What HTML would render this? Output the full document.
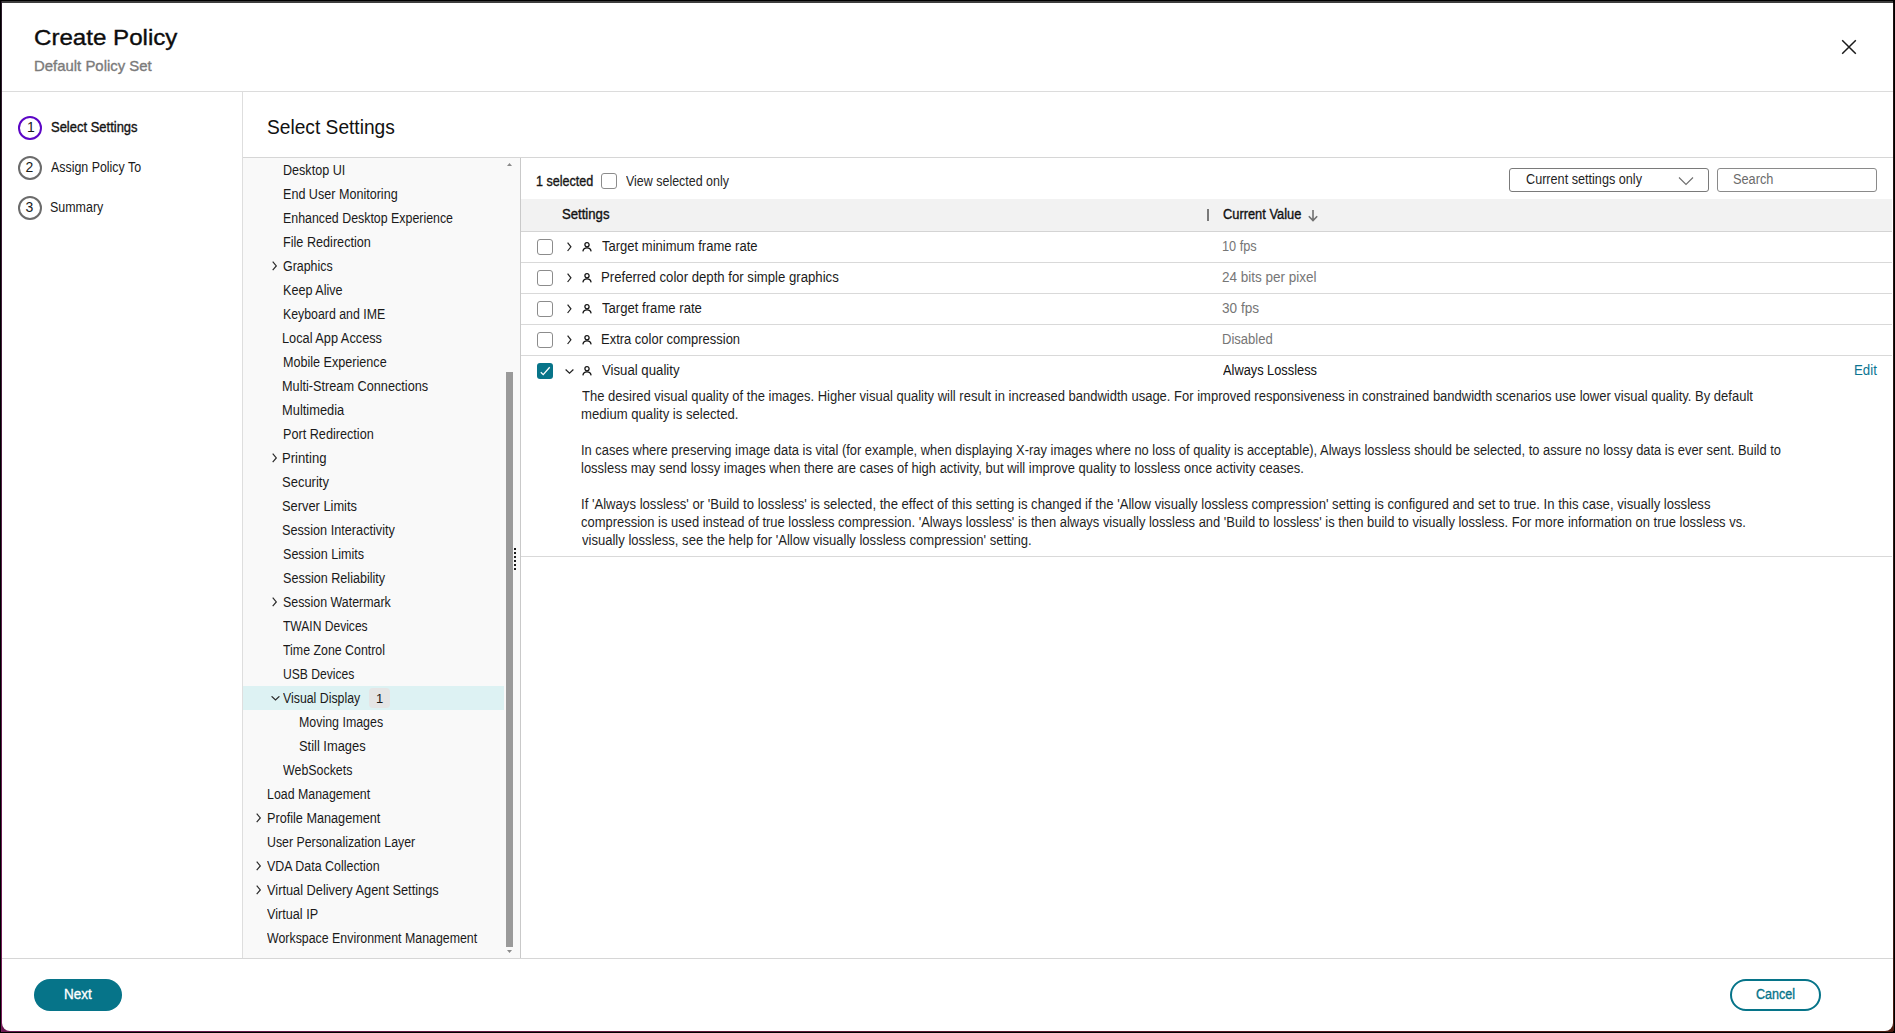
<!DOCTYPE html>
<html><head><meta charset="utf-8">
<style>
*{box-sizing:border-box;margin:0;padding:0}
html,body{width:1895px;height:1033px;overflow:hidden;background:#000}
body{position:relative;font-family:"Liberation Sans", sans-serif}
.a{position:absolute}
.t{position:absolute;white-space:nowrap;transform-origin:0 0}
</style></head><body>
<div class="a" style="left:2px;top:1px;width:1891px;height:2px;background:#3d3d3d"></div>
<div class="a" style="left:1px;top:1px;width:1px;height:1031px;background:linear-gradient(#2a1a2a,#521c44 50%,#7a1c5c)"></div>
<div class="a" style="left:1893px;top:3px;width:1px;height:1028px;background:linear-gradient(#1e1212,#3d2019 90%,#4a1a10)"></div>
<div class="a" style="left:2px;top:1031px;width:1891px;height:1px;background:linear-gradient(90deg,#6a1a50,#4a1a10)"></div>
<div class="a" style="left:2px;top:1020px;width:10px;height:11px;background:#6a1a50"></div>
<div class="a" style="left:1883px;top:1020px;width:10px;height:11px;background:#4a1a10"></div>
<div class="a" style="left:2px;top:3px;width:1891px;height:1028px;background:#fff;border-radius:0 0 8px 8px"></div>
<svg class="a" style="left:1841px;top:39px" width="16" height="16" viewBox="0 0 16 16"><path d="M1.2 1.2 L14.8 14.8 M14.8 1.2 L1.2 14.8" stroke="#1a1a1a" stroke-width="1.5" fill="none"/></svg>
<div class="a" style="left:2px;top:91px;width:1891px;height:1px;background:#dcdcdc"></div>
<div class="a" style="left:242px;top:92px;width:1px;height:866px;background:#dedede"></div>
<div class="a" style="left:18px;top:116px;width:24px;height:24px;border:2px solid #5c06c6;border-radius:50%"></div>
<div class="a" style="left:18px;top:156px;width:24px;height:24px;border:2px solid #6b6b6b;border-radius:50%"></div>
<div class="a" style="left:18px;top:196px;width:24px;height:24px;border:2px solid #6b6b6b;border-radius:50%"></div>
<div class="a" style="left:243px;top:157px;width:1650px;height:1px;background:#d6d6d6"></div>
<div class="a" style="left:243px;top:158px;width:277px;height:800px;background:#f9f9f9"></div>
<div class="a" style="left:520px;top:158px;width:1px;height:800px;background:#c9c9c9"></div>
<div class="a" style="left:243px;top:686px;width:261px;height:24px;background:#ddf2f3"></div>
<div class="a" style="left:369px;top:688px;width:21px;height:20px;border-radius:4px;background:#e5e5e5"></div>
<svg class="a" style="left:272px;top:261px" width="6" height="11" viewBox="0 0 6 11"><path d="M0.7 0.7 L4.3 4.9 L0.7 9.1" stroke="#2a2a2a" stroke-width="1.2" fill="none"/></svg>
<svg class="a" style="left:272px;top:453px" width="6" height="11" viewBox="0 0 6 11"><path d="M0.7 0.7 L4.3 4.9 L0.7 9.1" stroke="#2a2a2a" stroke-width="1.2" fill="none"/></svg>
<svg class="a" style="left:272px;top:597px" width="6" height="11" viewBox="0 0 6 11"><path d="M0.7 0.7 L4.3 4.9 L0.7 9.1" stroke="#2a2a2a" stroke-width="1.2" fill="none"/></svg>
<svg class="a" style="left:271px;top:696px" width="9" height="5" viewBox="0 0 9 5"><path d="M0.6 0.3 L4.5 3.9 L8.4 0.3" stroke="#2a2a2a" stroke-width="1.2" fill="none"/></svg>
<svg class="a" style="left:256px;top:813px" width="6" height="11" viewBox="0 0 6 11"><path d="M0.7 0.7 L4.3 4.9 L0.7 9.1" stroke="#2a2a2a" stroke-width="1.2" fill="none"/></svg>
<svg class="a" style="left:256px;top:861px" width="6" height="11" viewBox="0 0 6 11"><path d="M0.7 0.7 L4.3 4.9 L0.7 9.1" stroke="#2a2a2a" stroke-width="1.2" fill="none"/></svg>
<svg class="a" style="left:256px;top:885px" width="6" height="11" viewBox="0 0 6 11"><path d="M0.7 0.7 L4.3 4.9 L0.7 9.1" stroke="#2a2a2a" stroke-width="1.2" fill="none"/></svg>
<svg class="a" style="left:507px;top:163px" width="5" height="3" viewBox="0 0 5 3"><path d="M0 3 L2.5 0 L5 3Z" fill="#8a8a8a"/></svg>
<div class="a" style="left:506px;top:372px;width:7px;height:575px;background:#9a9a9a"></div>
<svg class="a" style="left:507px;top:950px" width="5" height="3" viewBox="0 0 5 3"><path d="M0 0 L2.5 3 L5 0Z" fill="#8a8a8a"/></svg>
<div class="a" style="left:514px;top:548px;width:2px;height:2px;background:#1a1a1a"></div>
<div class="a" style="left:514px;top:552px;width:2px;height:2px;background:#1a1a1a"></div>
<div class="a" style="left:514px;top:556px;width:2px;height:2px;background:#1a1a1a"></div>
<div class="a" style="left:514px;top:560px;width:2px;height:2px;background:#1a1a1a"></div>
<div class="a" style="left:514px;top:564px;width:2px;height:2px;background:#1a1a1a"></div>
<div class="a" style="left:514px;top:568px;width:2px;height:2px;background:#1a1a1a"></div>
<div class="a" style="left:601px;top:173px;width:16px;height:16px;border:1.5px solid #8c8c8c;border-radius:3px;background:#fff"></div>
<div class="a" style="left:1509px;top:168px;width:200px;height:24px;border:1px solid #7a7a7a;border-radius:3px"></div>
<svg class="a" style="left:1678px;top:176px" width="16" height="10" viewBox="0 0 16 10"><path d="M1 1.5 L8 8.5 L15 1.5" stroke="#6e6e6e" stroke-width="1.1" fill="none"/></svg>
<div class="a" style="left:1717px;top:168px;width:160px;height:24px;border:1px solid #8a8a8a;border-radius:3px"></div>
<div class="a" style="left:521px;top:199px;width:1371px;height:32px;background:#f2f2f2"></div>
<div class="a" style="left:521px;top:231px;width:1371px;height:1px;background:#d4d4d4"></div>
<div class="a" style="left:1207px;top:209px;width:2px;height:12px;background:#7a7a7a"></div>
<svg class="a" style="left:1307px;top:209px" width="12" height="13" viewBox="0 0 12 13"><path d="M6 1 L6 11.5 M1.8 7.3 L6 11.5 L10.2 7.3" stroke="#707070" stroke-width="1.6" fill="none"/></svg>
<div class="a" style="left:537px;top:239px;width:16px;height:16px;border:1.5px solid #8c8c8c;border-radius:3px;background:#fff"></div>
<svg class="a" style="left:567px;top:242px" width="6" height="11" viewBox="0 0 6 11"><path d="M0.6 0.6 L3.9 4.8 L0.6 9" stroke="#222" stroke-width="1.2" fill="none"/></svg>
<svg class="a" style="left:582px;top:242px" width="11" height="11" viewBox="0 0 11 11"><circle cx="5" cy="2.8" r="2.1" stroke="#111" stroke-width="1.25" fill="none"/><path d="M0.9 9.4 C1.2 6.9 2.9 5.8 5 5.8 C7.1 5.8 8.8 6.9 9.1 9.4" stroke="#111" stroke-width="1.25" fill="none"/></svg>
<div class="a" style="left:521px;top:262px;width:1371px;height:1px;background:#d9d9d9"></div>
<div class="a" style="left:537px;top:270px;width:16px;height:16px;border:1.5px solid #8c8c8c;border-radius:3px;background:#fff"></div>
<svg class="a" style="left:567px;top:273px" width="6" height="11" viewBox="0 0 6 11"><path d="M0.6 0.6 L3.9 4.8 L0.6 9" stroke="#222" stroke-width="1.2" fill="none"/></svg>
<svg class="a" style="left:582px;top:273px" width="11" height="11" viewBox="0 0 11 11"><circle cx="5" cy="2.8" r="2.1" stroke="#111" stroke-width="1.25" fill="none"/><path d="M0.9 9.4 C1.2 6.9 2.9 5.8 5 5.8 C7.1 5.8 8.8 6.9 9.1 9.4" stroke="#111" stroke-width="1.25" fill="none"/></svg>
<div class="a" style="left:521px;top:293px;width:1371px;height:1px;background:#d9d9d9"></div>
<div class="a" style="left:537px;top:301px;width:16px;height:16px;border:1.5px solid #8c8c8c;border-radius:3px;background:#fff"></div>
<svg class="a" style="left:567px;top:304px" width="6" height="11" viewBox="0 0 6 11"><path d="M0.6 0.6 L3.9 4.8 L0.6 9" stroke="#222" stroke-width="1.2" fill="none"/></svg>
<svg class="a" style="left:582px;top:304px" width="11" height="11" viewBox="0 0 11 11"><circle cx="5" cy="2.8" r="2.1" stroke="#111" stroke-width="1.25" fill="none"/><path d="M0.9 9.4 C1.2 6.9 2.9 5.8 5 5.8 C7.1 5.8 8.8 6.9 9.1 9.4" stroke="#111" stroke-width="1.25" fill="none"/></svg>
<div class="a" style="left:521px;top:324px;width:1371px;height:1px;background:#d9d9d9"></div>
<div class="a" style="left:537px;top:332px;width:16px;height:16px;border:1.5px solid #8c8c8c;border-radius:3px;background:#fff"></div>
<svg class="a" style="left:567px;top:335px" width="6" height="11" viewBox="0 0 6 11"><path d="M0.6 0.6 L3.9 4.8 L0.6 9" stroke="#222" stroke-width="1.2" fill="none"/></svg>
<svg class="a" style="left:582px;top:335px" width="11" height="11" viewBox="0 0 11 11"><circle cx="5" cy="2.8" r="2.1" stroke="#111" stroke-width="1.25" fill="none"/><path d="M0.9 9.4 C1.2 6.9 2.9 5.8 5 5.8 C7.1 5.8 8.8 6.9 9.1 9.4" stroke="#111" stroke-width="1.25" fill="none"/></svg>
<div class="a" style="left:521px;top:355px;width:1371px;height:1px;background:#d9d9d9"></div>
<div class="a" style="left:537px;top:363px;width:16px;height:16px;border-radius:3px;background:#077489"></div>
<svg class="a" style="left:537px;top:363px" width="16" height="16" viewBox="0 0 16 16"><path d="M3.8 9.3 L6.2 11.6 L12.7 4.2" stroke="#fff" stroke-width="1.3" fill="none"/></svg>
<svg class="a" style="left:565px;top:369px" width="9" height="5" viewBox="0 0 9 5"><path d="M0.6 0.5 L4.5 4.1 L8.4 0.5" stroke="#222" stroke-width="1.2" fill="none"/></svg>
<svg class="a" style="left:582px;top:366px" width="11" height="11" viewBox="0 0 11 11"><circle cx="5" cy="2.8" r="2.1" stroke="#111" stroke-width="1.25" fill="none"/><path d="M0.9 9.4 C1.2 6.9 2.9 5.8 5 5.8 C7.1 5.8 8.8 6.9 9.1 9.4" stroke="#111" stroke-width="1.25" fill="none"/></svg>
<div class="a" style="left:521px;top:556px;width:1371px;height:1px;background:#d9d9d9"></div>
<div class="a" style="left:2px;top:958px;width:1891px;height:1px;background:#d6d6d6"></div>
<div class="a" style="left:34px;top:979px;width:88px;height:32px;border-radius:16px;background:#067489"></div>
<div class="a" style="left:1730px;top:979px;width:91px;height:32px;border-radius:16px;border:2px solid #067489"></div>
<div class="t" id="t0" style="left:33.60px;top:27px;font-size:22px;line-height:22px;font-weight:400;color:#0d0d0d;-webkit-text-stroke-width:0.35px;transform:scaleX(1.0962);">Create Policy</div>
<div class="t" id="t1" style="left:33.71px;top:58px;font-size:15px;line-height:15px;font-weight:400;color:#7b7b7b;-webkit-text-stroke-width:0.35px;transform:scaleX(0.9941);">Default Policy Set</div>
<div class="t" id="t2" style="left:50.50px;top:120px;font-size:14px;line-height:14px;font-weight:400;color:#141414;-webkit-text-stroke-width:0.35px;transform:scaleX(0.9269);">Select Settings</div>
<div class="t" id="t3" style="left:50.50px;top:160px;font-size:14px;line-height:14px;font-weight:400;color:#1a1a1a;transform:scaleX(0.8861);">Assign Policy To</div>
<div class="t" id="t4" style="left:49.61px;top:200px;font-size:14px;line-height:14px;font-weight:400;color:#1a1a1a;transform:scaleX(0.8898);">Summary</div>
<div class="t" id="t5" style="left:27.00px;top:120px;font-size:14px;line-height:14px;font-weight:400;color:#1a1a1a;">1</div>
<div class="t" id="t6" style="left:25.60px;top:160px;font-size:14px;line-height:14px;font-weight:400;color:#1a1a1a;">2</div>
<div class="t" id="t7" style="left:25.60px;top:200px;font-size:14px;line-height:14px;font-weight:400;color:#1a1a1a;">3</div>
<div class="t" id="t8" style="left:266.84px;top:117px;font-size:20px;line-height:20px;font-weight:400;color:#111;transform:scaleX(0.9583);">Select Settings</div>
<div class="t" id="t9" style="left:282.50px;top:163px;font-size:14px;line-height:14px;font-weight:400;color:#1a1a1a;transform:scaleX(0.8985);">Desktop UI</div>
<div class="t" id="t10" style="left:282.50px;top:187px;font-size:14px;line-height:14px;font-weight:400;color:#1a1a1a;transform:scaleX(0.8984);">End User Monitoring</div>
<div class="t" id="t11" style="left:282.52px;top:211px;font-size:14px;line-height:14px;font-weight:400;color:#1a1a1a;transform:scaleX(0.8843);">Enhanced Desktop Experience</div>
<div class="t" id="t12" style="left:282.50px;top:235px;font-size:14px;line-height:14px;font-weight:400;color:#1a1a1a;transform:scaleX(0.9031);">File Redirection</div>
<div class="t" id="t13" style="left:282.51px;top:259px;font-size:14px;line-height:14px;font-weight:400;color:#1a1a1a;transform:scaleX(0.8873);">Graphics</div>
<div class="t" id="t14" style="left:282.50px;top:283px;font-size:14px;line-height:14px;font-weight:400;color:#1a1a1a;transform:scaleX(0.9015);">Keep Alive</div>
<div class="t" id="t15" style="left:282.52px;top:307px;font-size:14px;line-height:14px;font-weight:400;color:#1a1a1a;transform:scaleX(0.8807);">Keyboard and IME</div>
<div class="t" id="t16" style="left:282.49px;top:331px;font-size:14px;line-height:14px;font-weight:400;color:#1a1a1a;transform:scaleX(0.9111);">Local App Access</div>
<div class="t" id="t17" style="left:282.50px;top:355px;font-size:14px;line-height:14px;font-weight:400;color:#1a1a1a;transform:scaleX(0.9000);">Mobile Experience</div>
<div class="t" id="t18" style="left:282.49px;top:379px;font-size:14px;line-height:14px;font-weight:400;color:#1a1a1a;transform:scaleX(0.9075);">Multi-Stream Connections</div>
<div class="t" id="t19" style="left:282.48px;top:403px;font-size:14px;line-height:14px;font-weight:400;color:#1a1a1a;transform:scaleX(0.9194);">Multimedia</div>
<div class="t" id="t20" style="left:282.50px;top:427px;font-size:14px;line-height:14px;font-weight:400;color:#1a1a1a;transform:scaleX(0.9040);">Port Redirection</div>
<div class="t" id="t21" style="left:282.46px;top:451px;font-size:14px;line-height:14px;font-weight:400;color:#1a1a1a;transform:scaleX(0.9370);">Printing</div>
<div class="t" id="t22" style="left:282.47px;top:475px;font-size:14px;line-height:14px;font-weight:400;color:#1a1a1a;transform:scaleX(0.9280);">Security</div>
<div class="t" id="t23" style="left:282.48px;top:499px;font-size:14px;line-height:14px;font-weight:400;color:#1a1a1a;transform:scaleX(0.9175);">Server Limits</div>
<div class="t" id="t24" style="left:282.49px;top:523px;font-size:14px;line-height:14px;font-weight:400;color:#1a1a1a;transform:scaleX(0.9065);">Session Interactivity</div>
<div class="t" id="t25" style="left:282.50px;top:547px;font-size:14px;line-height:14px;font-weight:400;color:#1a1a1a;transform:scaleX(0.8978);">Session Limits</div>
<div class="t" id="t26" style="left:282.50px;top:571px;font-size:14px;line-height:14px;font-weight:400;color:#1a1a1a;transform:scaleX(0.8991);">Session Reliability</div>
<div class="t" id="t27" style="left:282.51px;top:595px;font-size:14px;line-height:14px;font-weight:400;color:#1a1a1a;transform:scaleX(0.8860);">Session Watermark</div>
<div class="t" id="t28" style="left:283.40px;top:619px;font-size:14px;line-height:14px;font-weight:400;color:#1a1a1a;transform:scaleX(0.8612);">TWAIN Devices</div>
<div class="t" id="t29" style="left:283.40px;top:643px;font-size:14px;line-height:14px;font-weight:400;color:#1a1a1a;transform:scaleX(0.8835);">Time Zone Control</div>
<div class="t" id="t30" style="left:282.53px;top:667px;font-size:14px;line-height:14px;font-weight:400;color:#1a1a1a;transform:scaleX(0.8654);">USB Devices</div>
<div class="t" id="t31" style="left:283.40px;top:691px;font-size:14px;line-height:14px;font-weight:400;color:#1a1a1a;transform:scaleX(0.8807);">Visual Display</div>
<div class="t" id="t32" style="left:298.61px;top:715px;font-size:14px;line-height:14px;font-weight:400;color:#1a1a1a;transform:scaleX(0.8862);">Moving Images</div>
<div class="t" id="t33" style="left:298.58px;top:739px;font-size:14px;line-height:14px;font-weight:400;color:#1a1a1a;transform:scaleX(0.9211);">Still Images</div>
<div class="t" id="t34" style="left:283.40px;top:763px;font-size:14px;line-height:14px;font-weight:400;color:#1a1a1a;transform:scaleX(0.8859);">WebSockets</div>
<div class="t" id="t35" style="left:266.52px;top:787px;font-size:14px;line-height:14px;font-weight:400;color:#1a1a1a;transform:scaleX(0.8836);">Load Management</div>
<div class="t" id="t36" style="left:266.50px;top:811px;font-size:14px;line-height:14px;font-weight:400;color:#1a1a1a;transform:scaleX(0.9048);">Profile Management</div>
<div class="t" id="t37" style="left:266.52px;top:835px;font-size:14px;line-height:14px;font-weight:400;color:#1a1a1a;transform:scaleX(0.8814);">User Personalization Layer</div>
<div class="t" id="t38" style="left:267.40px;top:859px;font-size:14px;line-height:14px;font-weight:400;color:#1a1a1a;transform:scaleX(0.8881);">VDA Data Collection</div>
<div class="t" id="t39" style="left:267.40px;top:883px;font-size:14px;line-height:14px;font-weight:400;color:#1a1a1a;transform:scaleX(0.9128);">Virtual Delivery Agent Settings</div>
<div class="t" id="t40" style="left:267.40px;top:907px;font-size:14px;line-height:14px;font-weight:400;color:#1a1a1a;transform:scaleX(0.9036);">Virtual IP</div>
<div class="t" id="t41" style="left:267.40px;top:931px;font-size:14px;line-height:14px;font-weight:400;color:#1a1a1a;transform:scaleX(0.8836);">Workspace Environment Management</div>
<div class="t" id="t42" style="left:376.00px;top:692px;font-size:13px;line-height:13px;font-weight:400;color:#1a1a1a;">1</div>
<div class="t" id="t43" style="left:536.30px;top:174px;font-size:14px;line-height:14px;font-weight:400;color:#161616;-webkit-text-stroke-width:0.35px;transform:scaleX(0.8968);">1 selected</div>
<div class="t" id="t44" style="left:625.70px;top:174px;font-size:14px;line-height:14px;font-weight:400;color:#262626;transform:scaleX(0.8897);">View selected only</div>
<div class="t" id="t45" style="left:1525.50px;top:172px;font-size:14px;line-height:14px;font-weight:400;color:#1f1f1f;transform:scaleX(0.9031);">Current settings only</div>
<div class="t" id="t46" style="left:1733.49px;top:172px;font-size:14px;line-height:14px;font-weight:400;color:#6b6b6b;transform:scaleX(0.9116);">Search</div>
<div class="t" id="t47" style="left:561.50px;top:207px;font-size:14px;line-height:14px;font-weight:400;color:#111;-webkit-text-stroke-width:0.35px;transform:scaleX(0.9380);">Settings</div>
<div class="t" id="t48" style="left:1223.20px;top:207px;font-size:14px;line-height:14px;font-weight:400;color:#111;-webkit-text-stroke-width:0.35px;transform:scaleX(0.9176);">Current Value</div>
<div class="t" id="t49" style="left:601.60px;top:239px;font-size:14px;line-height:14px;font-weight:400;color:#1a1a1a;transform:scaleX(0.9299);">Target minimum frame rate</div>
<div class="t" id="t50" style="left:1222.49px;top:239px;font-size:14px;line-height:14px;font-weight:400;color:#767676;transform:scaleX(0.9108);">10 fps</div>
<div class="t" id="t51" style="left:600.66px;top:270px;font-size:14px;line-height:14px;font-weight:400;color:#1a1a1a;transform:scaleX(0.9401);">Preferred color depth for simple graphics</div>
<div class="t" id="t52" style="left:1222.44px;top:270px;font-size:14px;line-height:14px;font-weight:400;color:#767676;transform:scaleX(0.9646);">24 bits per pixel</div>
<div class="t" id="t53" style="left:601.60px;top:301px;font-size:14px;line-height:14px;font-weight:400;color:#1a1a1a;transform:scaleX(0.9368);">Target frame rate</div>
<div class="t" id="t54" style="left:1222.43px;top:301px;font-size:14px;line-height:14px;font-weight:400;color:#767676;transform:scaleX(0.9703);">30 fps</div>
<div class="t" id="t55" style="left:600.67px;top:332px;font-size:14px;line-height:14px;font-weight:400;color:#1a1a1a;transform:scaleX(0.9262);">Extra color compression</div>
<div class="t" id="t56" style="left:1222.47px;top:332px;font-size:14px;line-height:14px;font-weight:400;color:#767676;transform:scaleX(0.9321);">Disabled</div>
<div class="t" id="t57" style="left:601.60px;top:363px;font-size:14px;line-height:14px;font-weight:400;color:#1a1a1a;transform:scaleX(0.9427);">Visual quality</div>
<div class="t" id="t58" style="left:1223.40px;top:363px;font-size:14px;line-height:14px;font-weight:400;color:#111;transform:scaleX(0.9147);">Always Lossless</div>
<div class="t" id="t59" style="left:1853.75px;top:363px;font-size:14px;line-height:14px;font-weight:400;color:#0b7592;transform:scaleX(0.9478);">Edit</div>
<div class="t" id="t60" style="left:581.50px;top:389px;font-size:14px;line-height:14px;font-weight:400;color:#1f1f1f;transform:scaleX(0.9290);">The desired visual quality of the images. Higher visual quality will result in increased bandwidth usage. For improved responsiveness in constrained bandwidth scenarios use lower visual quality. By default</div>
<div class="t" id="t61" style="left:580.56px;top:407px;font-size:14px;line-height:14px;font-weight:400;color:#1f1f1f;transform:scaleX(0.9367);">medium quality is selected.</div>
<div class="t" id="t62" style="left:580.58px;top:443px;font-size:14px;line-height:14px;font-weight:400;color:#1f1f1f;transform:scaleX(0.9212);">In cases where preserving image data is vital (for example, when displaying X-ray images where no loss of quality is acceptable), Always lossless should be selected, to assure no lossy data is ever sent. Build to</div>
<div class="t" id="t63" style="left:580.57px;top:461px;font-size:14px;line-height:14px;font-weight:400;color:#1f1f1f;transform:scaleX(0.9273);">lossless may send lossy images when there are cases of high activity, but will improve quality to lossless once activity ceases.</div>
<div class="t" id="t64" style="left:580.56px;top:497px;font-size:14px;line-height:14px;font-weight:400;color:#1f1f1f;transform:scaleX(0.9369);">If 'Always lossless' or 'Build to lossless' is selected, the effect of this setting is changed if the 'Allow visually lossless compression' setting is configured and set to true. In this case, visually lossless</div>
<div class="t" id="t65" style="left:580.57px;top:515px;font-size:14px;line-height:14px;font-weight:400;color:#1f1f1f;transform:scaleX(0.9253);">compression is used instead of true lossless compression. 'Always lossless' is then always visually lossless and 'Build to lossless' is then build to visually lossless. For more information on true lossless vs.</div>
<div class="t" id="t66" style="left:581.50px;top:533px;font-size:14px;line-height:14px;font-weight:400;color:#1f1f1f;transform:scaleX(0.9324);">visually lossless, see the help for 'Allow visually lossless compression' setting.</div>
<div class="t" id="t67" style="left:64.04px;top:987px;font-size:14px;line-height:14px;font-weight:400;color:#ffffff;-webkit-text-stroke-width:0.35px;transform:scaleX(0.9643);">Next</div>
<div class="t" id="t68" style="left:1756.40px;top:987px;font-size:14px;line-height:14px;font-weight:400;color:#067489;-webkit-text-stroke-width:0.35px;transform:scaleX(0.8977);">Cancel</div>
</body></html>
